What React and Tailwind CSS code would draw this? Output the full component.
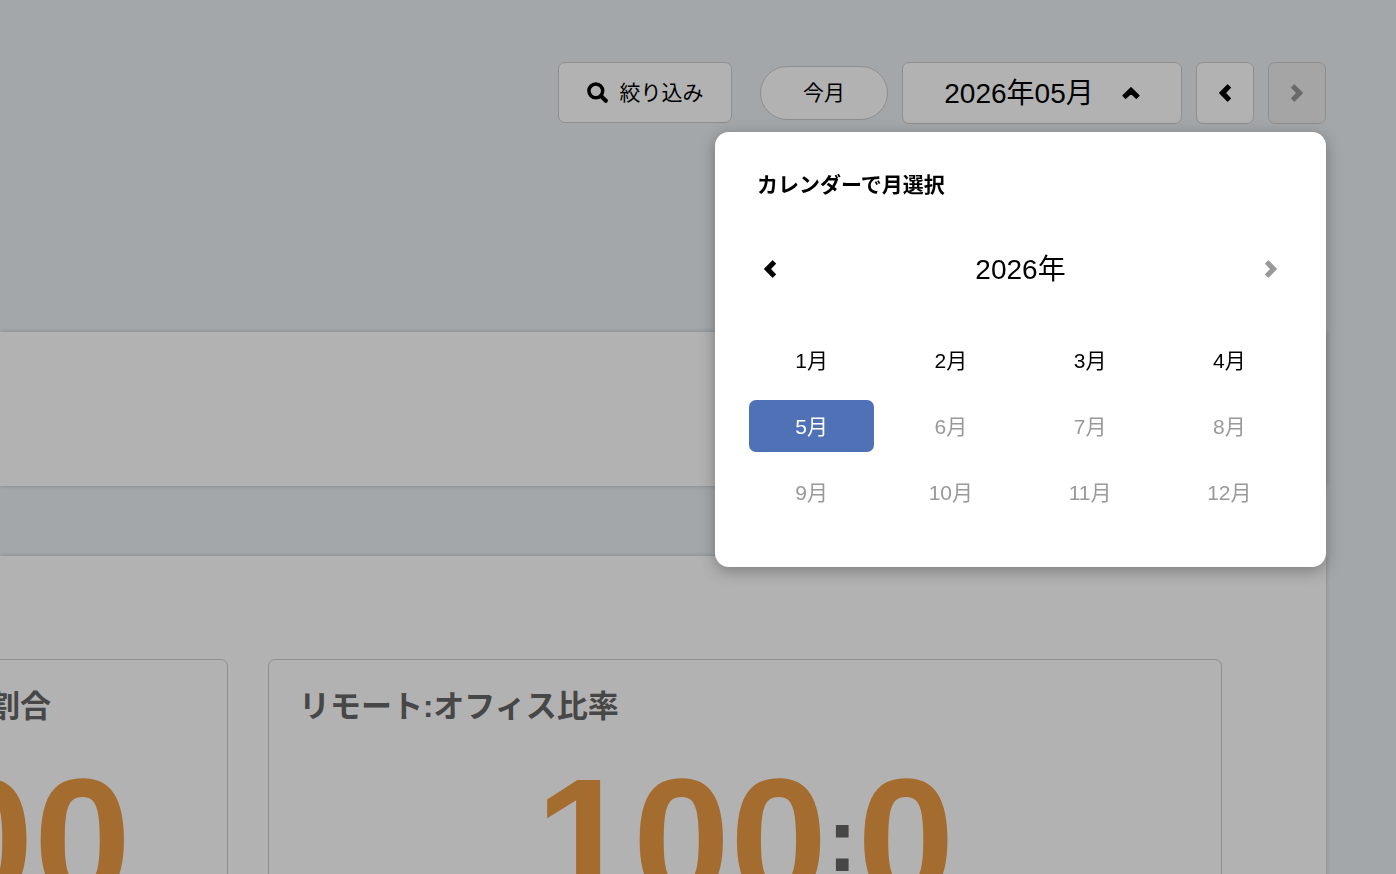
const SELECTED_MONTH = 5;
const months = Array.from({ length: 12 }, (_, i) => i + 1);

function SearchIcon() {
    return (
        <svg width="22" height="22" viewBox="0 0 22 22" fill="none" stroke="currentColor" aria-hidden="true">
            <circle cx="8.8" cy="8.8" r="6.9" strokeWidth="3.5" />
            <path d="M14.2 14.2l4.6 4.6" strokeWidth="4.2" strokeLinecap="round" />
        </svg>
    );
}

// Points up by default, rotated through className
function Chevron({ className = '' }) {
    return (
        <svg
            width="18"
            height="18"
            viewBox="0 0 18 18"
            fill="currentColor"
            stroke="currentColor"
            strokeWidth="1.2"
            strokeLinejoin="round"
            className={className}
            aria-hidden="true"
        >
            <path d="M9 3.7l8.1 7.9-2.8 2.8L9 9.2l-5.3 5.2-2.8-2.8z" />
        </svg>
    );
}

function MonthPicker() {
    return (
        <div
            role="dialog"
            aria-labelledby="picker-title"
            className="absolute right-0 top-full z-20 mt-2 w-[611px] rounded-[14px] bg-white px-[34px] pt-[38px] pb-[49px] shadow-[0_4px_16px_rgba(0,0,0,0.3)]"
        >
            <h2 id="picker-title" className="px-2 text-[21px] leading-[30px] font-bold">
                カレンダーで月選択
            </h2>

            {/* Year */}
            <div className="mt-[43px] flex h-[52px] items-center justify-between px-3">
                <button type="button" aria-label="前年">
                    <Chevron className="-rotate-90" />
                </button>
                <span className="pt-0.5 text-[28px]">2026年</span>
                <button type="button" aria-label="翌年" disabled className="text-[#999]">
                    <Chevron className="rotate-90" />
                </button>
            </div>

            {/* Months */}
            <div className="mt-[39px] grid grid-cols-4 gap-[14px]">
                {months.map((m) => (
                    <button
                        key={m}
                        type="button"
                        disabled={m > SELECTED_MONTH}
                        className={`h-[52px] rounded-[7px] pt-0.5 text-[21px] ${m === SELECTED_MONTH ? 'bg-[#4f71b6] text-white' : 'disabled:text-[#999]'}`}
                    >
                        {m}月
                    </button>
                ))}
            </div>
        </div>
    );
}

function Toolbar() {
    return (
        <div className="relative flex items-center justify-end gap-[14px]">
            <button type="button" className="mr-[14px] flex h-[61px] w-[174px] items-center justify-center gap-[11px] self-start rounded-[7px] border border-[#ccc] bg-white text-[21px]">
                <SearchIcon />
                絞り込み
            </button>
            <button type="button" className="h-[54px] w-32 rounded-full border border-[#ccc] bg-white text-[21px]">
                今月
            </button>
            <button type="button" aria-expanded="true" className="flex h-[62px] w-[280px] items-center justify-center gap-7 rounded-[7px] border border-[#ccc] bg-white text-[28px]">
                <span className="pt-0.5">2026年05月</span>
                <Chevron />
            </button>
            <button type="button" aria-label="前月" className="flex h-[62px] w-[58px] items-center justify-center rounded-[7px] border border-[#ccc] bg-white">
                <Chevron className="-rotate-90" />
            </button>
            <button type="button" aria-label="翌月" disabled className="flex h-[62px] w-[58px] items-center justify-center rounded-[7px] border border-[#ccc] bg-[#ededed] text-[#999]">
                <Chevron className="rotate-90" />
            </button>
            <MonthPicker />
        </div>
    );
}

export default function App() {
    return (
        <div className="h-screen overflow-hidden bg-[#eaf0f4] pt-[62px] pr-[70px] font-['Liberation_Sans','Noto_Sans_CJK_JP',sans-serif] text-black">
            <Toolbar />

            <section className="mt-[208px] h-[154px] bg-white shadow-[0_0_5px_rgba(0,0,0,0.2)]" />

            <section className="mt-[70px] bg-white pt-[103px] pr-[104px] pb-[104px] shadow-[0_0_5px_rgba(0,0,0,0.2)]">
                <div className="-ml-[42px] flex gap-10 font-bold text-[#666]">
                    <article className="h-[350px] w-[270px] shrink-0 rounded-[7px] border border-[#ccc] px-[30px] pt-6">
                        <h3 className="text-[31px] leading-[46px]">割合</h3>
                        <p className="mt-[10px] flex justify-end pr-[66px] text-[175px] leading-[200px] text-[#ed9b46]">00</p>
                    </article>
                    <article className="h-[350px] flex-1 rounded-[7px] border border-[#ccc] px-[30px] pt-6">
                        <h3 className="text-[31px] leading-[46px]">リモート:オフィス比率</h3>
                        <p className="mt-[10px] flex items-center justify-center text-[175px] leading-[200px] text-[#ed9b46]">
                            100
                            <span className="text-[90px] leading-none text-[#666]">:</span>
                            0
                        </p>
                    </article>
                </div>
            </section>

            {/* Backdrop */}
            <div className="fixed inset-0 z-10 bg-black/30" />
        </div>
    );
}
